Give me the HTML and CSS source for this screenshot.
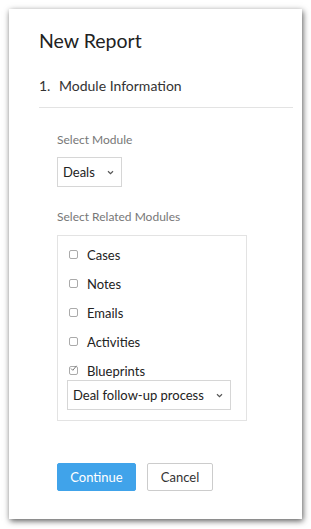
FILE: index.html
```html
<!DOCTYPE html>
<html>
<head>
<meta charset="utf-8">
<link rel="stylesheet" href="styles.css">
</head>
<body>
<div class="card">
  <h1 class="title">New Report</h1>
  <div class="step"><span class="num">1.</span><span>Module Information</span></div>
  <div class="content">
    <div class="label">Select Module</div>
    <div class="select small">Deals <span class="chev"><svg width="7" height="5" viewBox="0 0 7 5"><path d="M1 1.2 L3.5 3.6 L6 1.2" fill="none" stroke="#555" stroke-width="1.2"/></svg></span></div>
    <div class="label l2">Select Related Modules</div>
    <div class="box">
      <div class="row"><span class="cb"></span>Cases</div>
      <div class="row"><span class="cb"></span>Notes</div>
      <div class="row"><span class="cb"></span>Emails</div>
      <div class="row"><span class="cb"></span>Activities</div>
      <div class="row last"><span class="cb checked"><svg width="9" height="9" viewBox="0 0 9 9"><path d="M2 4.5 L3.8 6.3 L7.5 1.8" fill="none" stroke="#777" stroke-width="1"/></svg></span>Blueprints</div>
      <div class="select wide">Deal follow-up process <span class="chev"><svg width="7" height="5" viewBox="0 0 7 5"><path d="M1 1.2 L3.5 3.6 L6 1.2" fill="none" stroke="#555" stroke-width="1.2"/></svg></span></div>
    </div>
    <div class="buttons">
      <button class="btn primary">Continue</button>
      <button class="btn">Cancel</button>
    </div>
  </div>
</div>
</body>
</html>
```
FILE: styles.css
```css
html, body { margin: 0; padding: 0; background: #fff; }
body { font-family: Lato, "Open Sans", sans-serif; color: #222; }
.card {
  margin: 9px;
  width: 293px;
  height: 510px;
  background: #fff;
  box-shadow: 1px 2px 6px rgba(0,0,0,0.65);
  box-sizing: border-box;
  padding: 20px 9px 0 30px;
}
.title {
  margin: 0;
  font-weight: 400;
  font-size: 19.5px;
  line-height: 24px;
  color: #222;
}
.step {
  margin-top: 24px;
  font-size: 14px;
  line-height: 18px;
  color: #333;
  padding-bottom: 12px;
  border-bottom: 1px solid #e3e3e3;
}
.step .num { display: inline-block; width: 20px; }
.content { padding-left: 18px; }
.label {
  margin-top: 24px;
  font-size: 12px;
  line-height: 16px;
  color: #777;
}
.label.l2 { margin-top: 22px; }
.select {
  box-sizing: border-box;
  border: 1px solid #d6d6d6;
  font-size: 13px;
  color: #222;
  display: flex;
  align-items: center;
  justify-content: space-between;
}
.select.small {
  margin-top: 9px;
  width: 65px;
  height: 30px;
  padding: 0 7px 0 5px;
}
.select.wide {
  width: 164px;
  height: 30px;
  padding: 0 7px 0 5px;
  margin-left: -2px;
}
.chev { display: flex; }
.box {
  margin-top: 10px;
  width: 190px;
  height: 186px;
  box-sizing: border-box;
  border: 1px solid #e3e3e3;
  padding: 4px 0 0 11px;
}
.row {
  display: flex;
  align-items: center;
  height: 29px;
  font-size: 13px;
  color: #222;
}
.row.last { margin-bottom: -5px; }
.cb {
  width: 7px;
  height: 7px;
  border: 1px solid #aaa;
  border-radius: 2px;
  margin-right: 9px;
  position: relative;
}
.cb.checked svg { position: absolute; left: -1px; top: -3px; }
.buttons {
  margin-top: 42px;
  display: flex;
  gap: 11px;
}
.btn {
  font-family: Lato, "Open Sans", sans-serif;
  font-size: 13px;
  height: 28px;
  border-radius: 2px;
  border: 1px solid #ccc;
  background: #fff;
  color: #333;
  padding: 0;
  width: 66px;
}
.btn.primary {
  background: #40a3ea;
  border-color: #40a3ea;
  color: #fff;
  width: 79px;
}
```
